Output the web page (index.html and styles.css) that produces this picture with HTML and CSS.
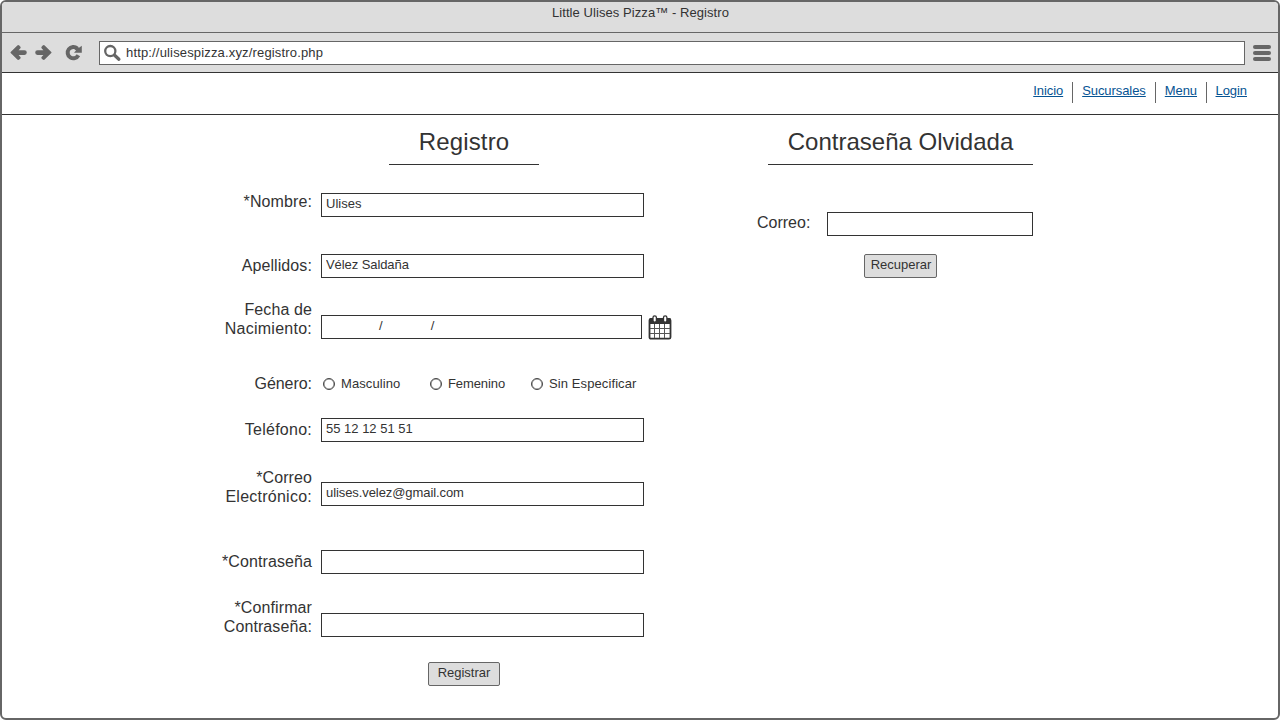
FILE: index.html
```html
<!DOCTYPE html>
<html lang="es">
<head>
<meta charset="utf-8">
<title>Little Ulises Pizza™ - Registro</title>
<link rel="stylesheet" href="styles.css">
</head>
<body>
<div class="window">
  <header class="titlebar">Little Ulises Pizza™ - Registro</header>
  <div class="toolbar">
    <svg class="arrow" viewBox="0 0 17 16"><path d="M.700 7 7.300.500Q8.300-.300 9.300.600L10.400 1.700Q11 2.500 10.400 3.200L8.600 5.200H14.500Q16.800 5.200 16.800 7.500T14.500 9.900H8.600L10.400 11.900Q11 12.600 10.400 13.400L9.300 14.500Q8.300 15.400 7.300 14.600L.700 8.100Q.200 7.500.700 7z" /></svg>
    <svg class="arrow forward" viewBox="0 0 17 16"><path transform="matrix(-1 0 0 1 17 0)" d="M.700 7 7.300.500Q8.300-.300 9.300.600L10.400 1.700Q11 2.500 10.400 3.200L8.600 5.200H14.500Q16.800 5.200 16.800 7.500T14.500 9.900H8.600L10.400 11.900Q11 12.600 10.400 13.400L9.300 14.500Q8.300 15.400 7.300 14.600L.700 8.100Q.200 7.500.700 7z" /></svg>
    <svg class="reload" viewBox="0 0 17 16"><path class="ring" d="M12.200 3.400A5.700 5.700 0 1 0 13.400 10.300" /><path class="tip" d="M16.800.800V7.700H9L11 5.400 9.600 4 11.600 1.200 14 2.800z" /></svg>
    <div class="address">
      <svg class="search" viewBox="0 0 17 17"><circle cx="6.300" cy="6.100" r="5.100" /><path d="M10.600 10.300l4.300 3.900" /></svg>
      <span>http://ulisespizza.xyz/registro.php</span>
    </div>
    <div class="burger"><i></i><i></i><i></i></div>
  </div>
  <nav class="nav">
    <a href="#">Inicio</a><a href="#">Sucursales</a><a href="#">Menu</a><a href="#">Login</a>
  </nav>
  <main class="content">
    <section class="register">
      <h1 class="heading">Registro</h1>
      <form class="form">
        <div class="row"><label>*Nombre:</label><input class="drop-1" type="text" value="Ulises"></div>
        <div class="row"><label class="drop-2">Apellidos:</label><input class="snug" type="text" value="Vélez Saldaña"></div>
        <div class="row">
          <label>Fecha de<br><span class="wide">Nacimiento:</span></label>
          <div class="date drop-15">
            <div class="date-field"><span>/</span><span>/</span></div>
            <svg class="calendar" viewBox="0 0 24 25">
              <rect class="sheet" x="1.500" y="4" width="21" height="19.700" rx="1.500" />
              <path class="band" d="M1 9V5a2 2 0 0 1 2-2h18a2 2 0 0 1 2 2v4z" />
              <path class="lines" d="M6.500 9v14M11.500 9v14M16.500 9v14M2 13.500h20M2 18.500h20" />
              <rect class="ring" x="5" y=".8" width="3.400" height="6.400" rx="1.700" />
              <rect class="ring" x="15.500" y=".8" width="3.400" height="6.400" rx="1.700" />
            </svg>
          </div>
        </div>
        <div class="row">
          <label class="even">Género:</label>
          <div class="options">
            <label class="loose"><input type="radio" name="genero">Masculino</label>
            <label class="tight"><input type="radio" name="genero">Femenino</label>
            <label class="loose"><input type="radio" name="genero">Sin Especificar</label>
          </div>
        </div>
        <div class="row"><label class="drop-2 wide">Teléfono:</label><input type="text" value="55 12 12 51 51"></div>
        <div class="row"><label>*Correo<br><span class="wide">Electrónico:</span></label><input class="drop-14 snug" type="text" value="ulises.velez@gmail.com"></div>
        <div class="row"><label class="drop-2">*Contraseña</label><input type="text"></div>
        <div class="row"><label>*Confirmar<br>Contraseña:</label><input class="drop-15" type="text"></div>
        <button class="button submit" type="button">Registrar</button>
      </form>
    </section>
    <section class="recover">
      <h1 class="heading">Contraseña Olvidada</h1>
      <div class="recover-row"><label>Correo:</label><input type="text"></div>
      <button class="button" type="button">Recuperar</button>
    </section>
  </main>
</div>
</body>
</html>
```
FILE: styles.css
```css
* { box-sizing: border-box; }
body { margin: 0; background: #fff; color: #333; font: 13px/15px "Liberation Sans", Arial, sans-serif; }
svg { display: block; fill: none; flex: none; overflow: visible; }

.window { width: 1280px; height: 720px; border: 2px solid #666; border-radius: 6px; overflow: hidden; }
.titlebar { height: 31px; padding: 3px 0 0 1px; background: #ddd; border-bottom: 1px solid #666; text-align: center; letter-spacing: .07px; }
.toolbar { display: flex; height: 39px; padding: 8px 7px 0 8px; background: #ddd; }

.arrow { width: 17px; height: 16px; margin: 4px 8px 0 0; }
.arrow path { fill: #666; }
.arrow.forward { margin-right: 13px; }
.reload { width: 17px; height: 16px; margin: 4px 17px 0 0; }
.reload .ring { stroke: #666; stroke-width: 4; }
.reload .tip { fill: #666; }

.address { display: flex; width: 1146px; height: 24px; padding: 3px 4px; background: #fff; border: 1px solid #666; }
.address span { letter-spacing: .16px; margin-left: 5px; }
.search { width: 17px; height: 17px; }
.search circle { stroke: #666; stroke-width: 2.300; }
.search path { stroke: #666; stroke-width: 3.300; stroke-linecap: round; }
.burger { display: flex; flex-direction: column; gap: 2px; width: 18px; margin: 4px 0 0 8px; }
.burger i { height: 4px; border-radius: 2px; background: #666; }

.nav { display: flex; justify-content: flex-end; height: 43px; margin: 0 -1px; padding: 9px 24px 0 0; border: 1px solid #333; background: #fff; }
.nav a { height: 21px; padding: 1px 9px 0; color: #055393; border-right: 1px solid #666; text-underline-offset: 1px; letter-spacing: -.07px; }
.nav a:last-child { border-right: 0; padding: 1px 7px 0 8.500px; }

.content { display: flex; padding: 13px 0 0 208px; }
.register { width: 462px; margin-right: 83px; }
.heading { margin: 0; height: 37px; font-size: 24px; line-height: 28px; font-weight: 400; text-align: center; border-bottom: 1px solid #333; }
.register .heading { width: 150px; margin-left: 179px; letter-spacing: .15px; }

.form { display: grid; grid-template-rows: 62px 46px 74px 44px 50px 82px 48px 64px 24px; padding-top: 27px; }
.row { display: grid; grid-template-columns: 102px 351px; column-gap: 9px; align-items: start; }
.row > label { font-size: 16px; line-height: 19px; text-align: right; white-space: nowrap; letter-spacing: .1px; }
.row > .wide, .row .wide { letter-spacing: .25px; }
.row > .even { letter-spacing: -.05px; }
.loose { letter-spacing: .1px; }
.tight { letter-spacing: -.1px; }
.drop-1 { margin-top: 1px !important; }
.drop-2 { margin-top: 2px; }
.drop-14 { margin-top: 14px !important; }
.drop-15 { margin-top: 15px !important; }

input[type="text"], .date-field { width: 323px; height: 24px; margin: 0; padding: 2px 4px 5px; border: 1px solid #333; border-radius: 0; background: #fff; color: #333; font: inherit; }
input.snug { letter-spacing: -.08px; }
.date { display: flex; gap: 6px; }
.date-field { display: flex; gap: 48px; width: 321px; padding-left: 57px; }
.calendar { width: 24px; height: 25px; }
.calendar .sheet { fill: #fff; stroke: #333; stroke-width: 1.800; }
.calendar .band { fill: #333; }
.calendar .lines { stroke: #555; stroke-width: 1; }
.calendar .ring { fill: #fff; stroke: #333; stroke-width: 1.300; }

.options { display: grid; grid-template-columns: 107px 101px auto; padding: 2px 0 0 2px; }
.options label { display: flex; gap: 6px; white-space: nowrap; }
.options input { appearance: none; flex: none; width: 12px; height: 12px; margin: 2px 0 0; border: 1px solid #444; border-radius: 50%; background: #fff; box-shadow: inset 0 0 0 .5px #777; }

.button { display: block; height: 24px; width: 73px; padding: 0 0 3px; border: 1px solid #666; border-radius: 2px; background: #ddd; color: #333; font: inherit; text-align: center; }
.recover .button { margin-left: 109px; padding-left: 1px; }
.submit { width: 72px; margin-left: 218px; }

.recover { width: 278px; }
.recover .heading { width: 265px; margin-left: 13px; }
.recover-row { display: flex; justify-content: space-between; margin: 47px 0 18px; }
.recover-row label { margin: 1px 0 0 2px; font-size: 16px; line-height: 19px; }
.recover-row input[type="text"] { width: 206px; }
```
